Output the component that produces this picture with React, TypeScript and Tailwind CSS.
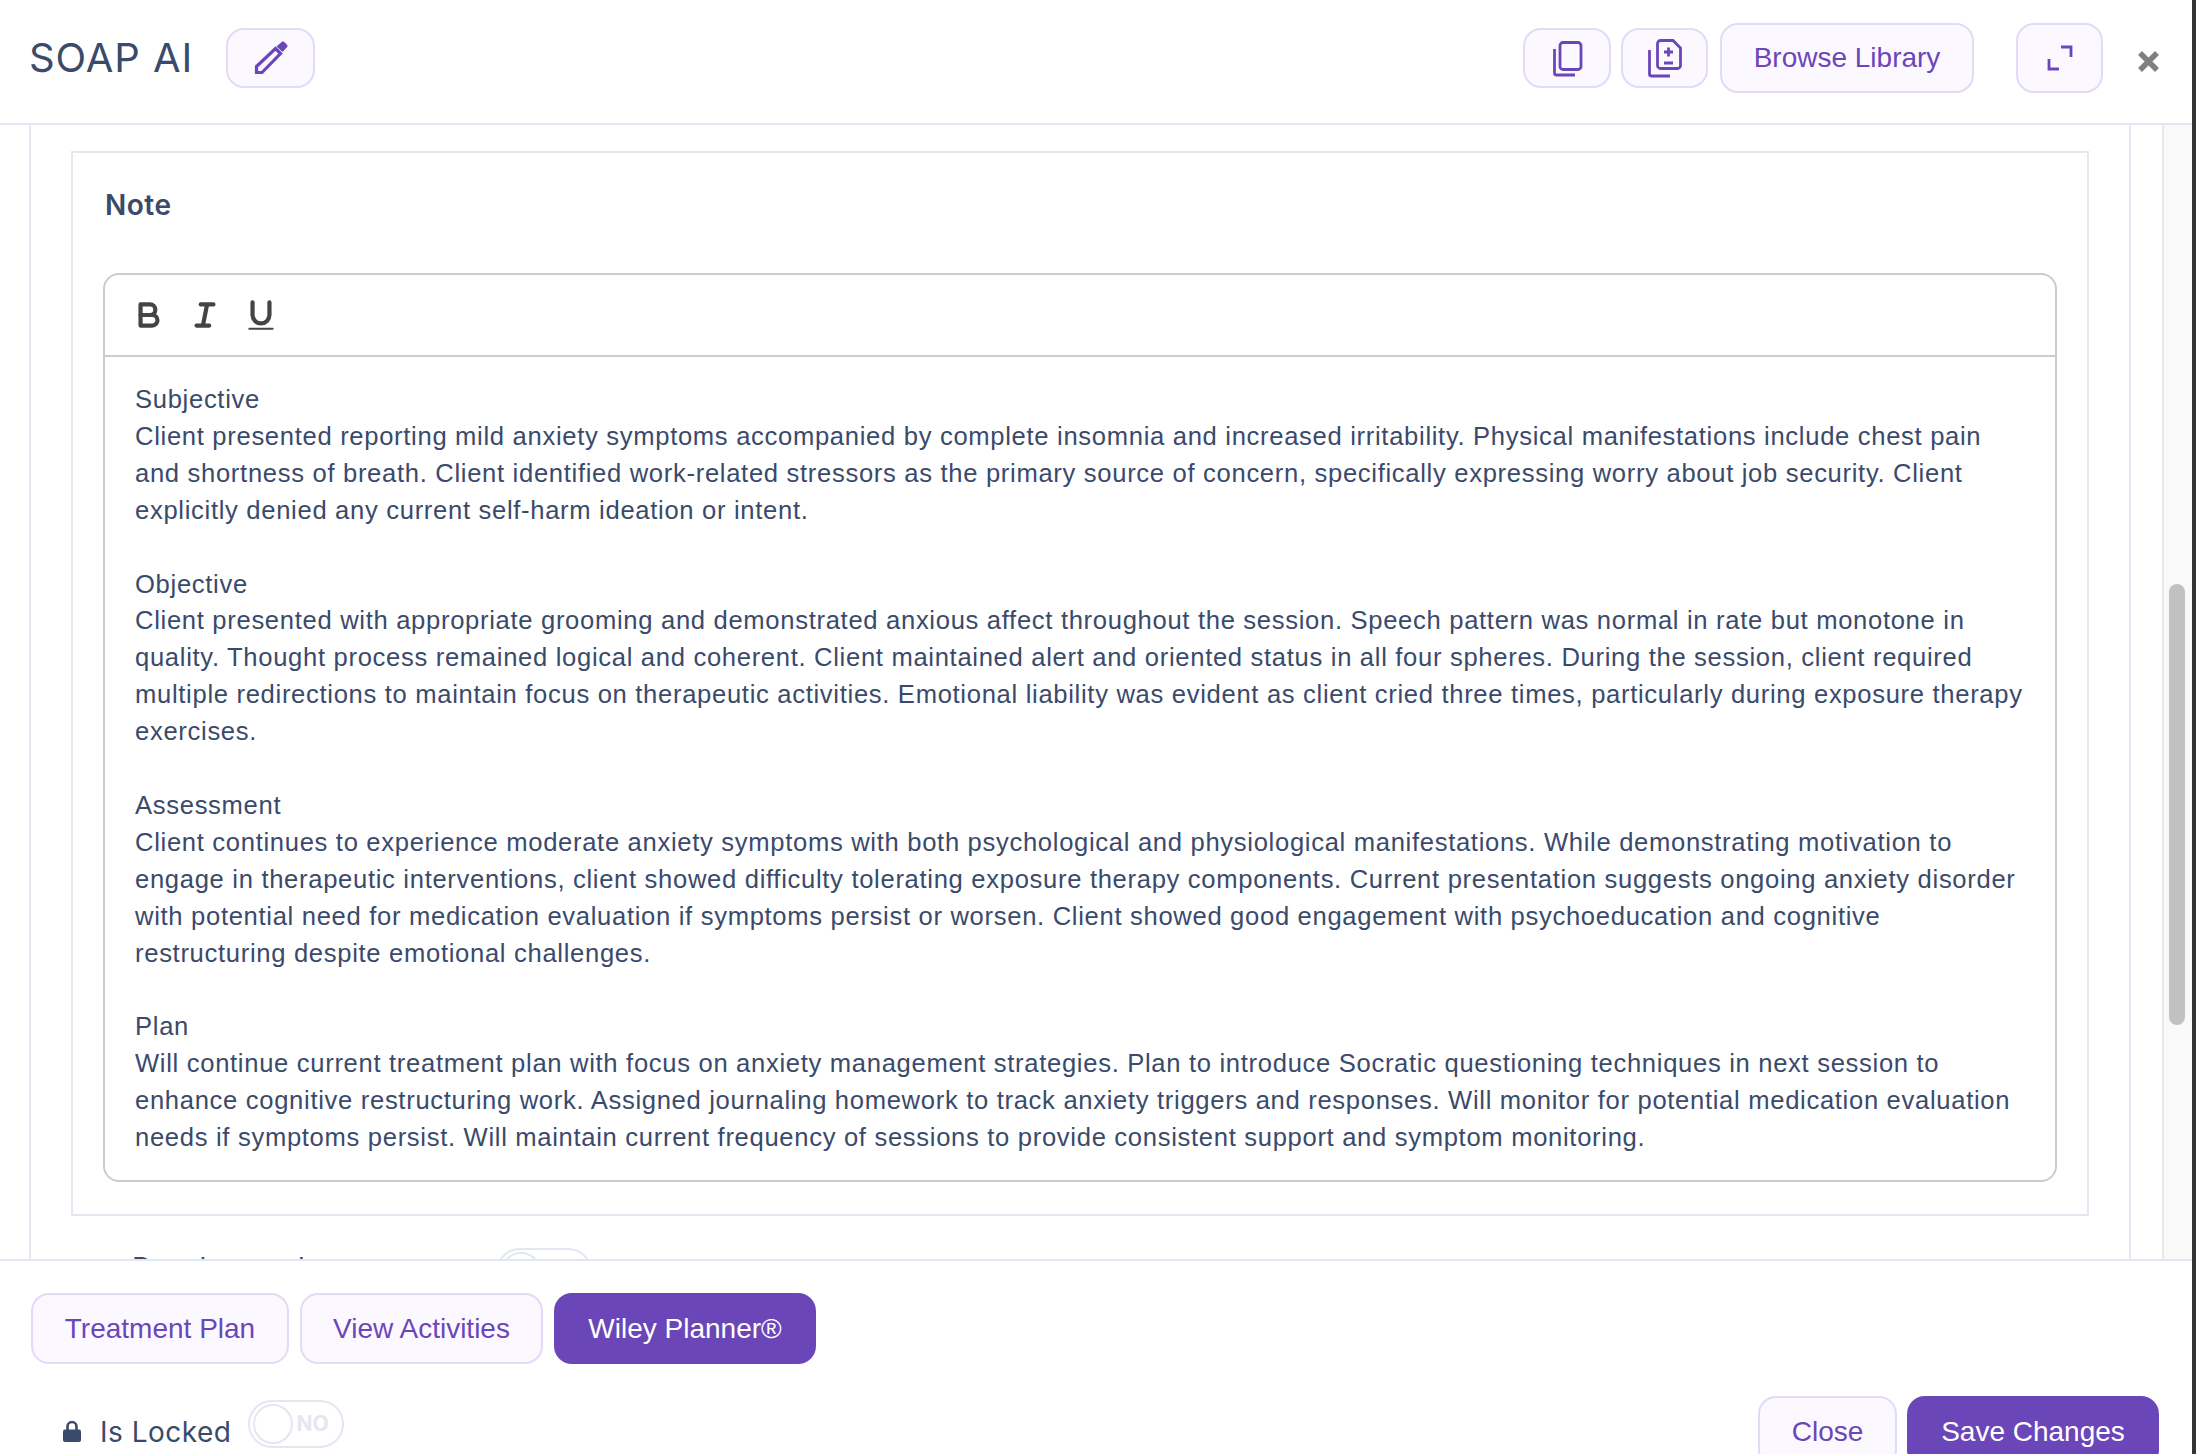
const softButton =
  "flex items-center justify-center border-2 border-[#e3daf8] bg-[#fbf9ff] text-[#6b46b8] rounded-[18px]";
const solidButton = "flex items-center justify-center bg-[#6b46b8] text-white rounded-[18px]";

const SECTIONS = [
  {
    title: "Subjective",
    body: "Client presented reporting mild anxiety symptoms accompanied by complete insomnia and increased irritability. Physical manifestations include chest pain and shortness of breath. Client identified work-related stressors as the primary source of concern, specifically expressing worry about job security. Client explicitly denied any current self-harm ideation or intent.",
  },
  {
    title: "Objective",
    body: "Client presented with appropriate grooming and demonstrated anxious affect throughout the session. Speech pattern was normal in rate but monotone in quality. Thought process remained logical and coherent. Client maintained alert and oriented status in all four spheres. During the session, client required multiple redirections to maintain focus on therapeutic activities. Emotional liability was evident as client cried three times, particularly during exposure therapy exercises.",
  },
  {
    title: "Assessment",
    body: "Client continues to experience moderate anxiety symptoms with both psychological and physiological manifestations. While demonstrating motivation to engage in therapeutic interventions, client showed difficulty tolerating exposure therapy components. Current presentation suggests ongoing anxiety disorder with potential need for medication evaluation if symptoms persist or worsen. Client showed good engagement with psychoeducation and cognitive restructuring despite emotional challenges.",
  },
  {
    title: "Plan",
    body: "Will continue current treatment plan with focus on anxiety management strategies. Plan to introduce Socratic questioning techniques in next session to enhance cognitive restructuring work. Assigned journaling homework to track anxiety triggers and responses. Will monitor for potential medication evaluation needs if symptoms persist. Will maintain current frequency of sessions to provide consistent support and symptom monitoring.",
  },
];

function Toggle() {
  return (
    <div className="flex items-center w-[96px] h-[48px] rounded-full border-2 border-[#e3e7f1] pl-[3px] shrink-0">
      <div className="w-[40px] h-[40px] rounded-full border-2 border-[#e3e7f1] bg-white" />
      <span className="ml-[4px] text-[21px] font-bold text-[#e3e7f1] font-['Inter',sans-serif]">NO</span>
    </div>
  );
}

export default function App() {
  return (
    <div className="w-[2196px] h-[1454px] bg-[#333333] overflow-hidden font-['Liberation_Sans',Arial,sans-serif]">
      <div className="w-[2192px] h-full bg-white flex flex-col">
        {/* header */}
        <div className="h-[125px] shrink-0 border-b-2 border-[#e3e7f1] flex items-center pl-[29px] pr-[32px] pb-[8px]">
          <h1 className="text-[40px] font-normal leading-[48px] tracking-[0.95px] text-[#3a4a6b] font-['Inter',sans-serif]">SOAP AI</h1>
          <button className={`${softButton} ml-[33px] w-[89px] h-[60px]`}>
            <svg width="34" height="34" viewBox="0 0 34 34" fill="none">
              <path d="M2.5 31.5V25.5L21.5 7.5L26.5 12.5L8 31.5Z" stroke="#6b46b8" strokeWidth="3.2" />
              <path d="M22.5 5.5L28 .8Q29 0 30 .8L33.2 4Q34 5 33.2 6L28.5 11Z" fill="#6b46b8" />
            </svg>
          </button>
          <button className={`${softButton} ml-auto w-[88px] h-[60px]`}>
            <svg className="mt-[2px]" width="32" height="40" viewBox="0 0 32 40" fill="none" stroke="#6b46b8" strokeWidth="2.8">
              <rect x="9" y="3.5" width="21" height="27" rx="3" />
              <path d="M3.5 10V34a2 2 0 0 0 2 2H24" />
            </svg>
          </button>
          <button className={`${softButton} ml-[10px] w-[87px] h-[60px]`}>
            <svg className="mt-[2px]" width="38" height="43" viewBox="0 0 38 43" fill="none" stroke="#6b46b8" strokeWidth="2.8">
              <path d="M14 3.5H27L34.5 11V28.5a3 3 0 0 1-3 3H14.5a3 3 0 0 1-3-3V6.5a3 3 0 0 1 3-3Z" />
              <path d="M3.5 13V37a2 2 0 0 0 2 2H24" />
              <path d="M22.5 10.5V19.5M18 15H27M18 26H27" />
            </svg>
          </button>
          <button className={`${softButton} ml-[12px] w-[254px] h-[70px] text-[28px]`}>
            Browse Library
          </button>
          <button className={`${softButton} ml-[42px] w-[87px] h-[70px]`}>
            <svg width="28" height="28" viewBox="0 0 28 28" fill="none" stroke="#6b46b8" strokeWidth="2.8">
              <path d="M15 3H25V13M3 15V25H13" />
            </svg>
          </button>
          <button className="ml-[34px] mt-[8px] w-[23px] h-[23px]">
            <svg width="23" height="23" viewBox="0 0 23 23" fill="none" stroke="#808080" strokeWidth="5.5">
              <path d="M3 3L20 20M20 3L3 20" />
            </svg>
          </button>
        </div>

        {/* scrolling body */}
        <div className="h-[1134px] shrink-0 flex overflow-hidden pl-[29px]">
          <div className="w-[2102px] shrink-0 border-x-2 border-[#e3e7f1] pl-[40px] pr-[40px] pt-[26px]">
            <div className="border-2 border-[#e3e7f1] pl-[30px] pr-[30px] pt-[35px] h-[1065px]">
              <h2 className="ml-[2px] text-[28px] leading-[34px] font-semibold tracking-[0.5px] text-[#3a4a6b] font-['Inter',sans-serif]">Note</h2>
              <div className="mt-[51px] border-2 border-[#cccccc] rounded-[16px] h-[909px] w-[1954px]">
                <div className="h-[82px] border-b-2 border-[#cccccc] flex items-center pl-[16px]">
                  <button className="w-[56px] flex justify-center">
                    <svg width="38" height="38" viewBox="0 0 18 18" fill="none" stroke="#444444" strokeWidth="2" strokeLinecap="round" strokeLinejoin="round">
                      <path d="M5,4H9.5A2.5,2.5,0,0,1,12,6.5v0A2.5,2.5,0,0,1,9.5,9H5A0,0,0,0,1,5,9V4A0,0,0,0,1,5,4Z" />
                      <path d="M5,9h5.5A2.5,2.5,0,0,1,13,11.5v0A2.5,2.5,0,0,1,10.5,14H5a0,0,0,0,1,0,0V9A0,0,0,0,1,5,9Z" />
                    </svg>
                  </button>
                  <button className="w-[56px] flex justify-center">
                    <svg width="38" height="38" viewBox="0 0 18 18" fill="none" stroke="#444444" strokeWidth="2" strokeLinecap="round">
                      <path d="M7 4H13M5 14H11M8 14L10 4" />
                    </svg>
                  </button>
                  <button className="w-[56px] flex justify-center">
                    <svg width="38" height="38" viewBox="0 0 18 18" fill="none" stroke="#444444" strokeWidth="2" strokeLinecap="round">
                      <path d="M5,3V9a4.012,4.012,0,0,0,4,4H9a4.012,4.012,0,0,0,4-4V3" />
                      <rect x="3" y="15" width="12" height="1" rx="0.5" fill="#444444" stroke="none" />
                    </svg>
                  </button>
                </div>
                <div className="pl-[30px] pr-[30px] pt-[24px] text-[25.6px] leading-[36.9px] tracking-[0.685px] text-[#3a4a6b]">
                  {SECTIONS.map((section) => (
                    <div key={section.title} className="mb-[36.9px] last:mb-0">
                      <p>{section.title}</p>
                      <p>{section.body}</p>
                    </div>
                  ))}
                </div>
              </div>
            </div>
            {/* next form row, cut off by the footer */}
            <div className="flex items-start mt-[32px] pl-[61px]">
              <span className="mt-[3px] w-[364px] text-[28px] leading-[34px] text-[#3a4a6b] font-['Inter',sans-serif]">Develop goals</span>
              <Toggle />
            </div>
          </div>
          <div className="ml-[31px] w-[30px] shrink-0 bg-[#f9f9f9] border-l-2 border-[#e8e8e8]">
            <div className="mt-[459px] ml-[5px] w-[16px] h-[441px] rounded-full bg-[#c1c1c1]" />
          </div>
        </div>

        {/* footer */}
        <div className="flex-1 border-t-2 border-[#e3e7f1] overflow-hidden">
          <div className="flex gap-[11px] pl-[31px] pt-[32px] text-[28px]">
            <button className={`${softButton} w-[258px] h-[71px]`}>Treatment Plan</button>
            <button className={`${softButton} w-[243px] h-[71px]`}>View Activities</button>
            <button className={`${solidButton} w-[262px] h-[71px]`}>Wiley Planner®</button>
          </div>
          <div className="flex items-start justify-between mt-[32px] pl-[63px] pr-[33px]">
            <div className="flex items-start">
              <svg className="mt-[24px]" width="18" height="22" viewBox="0 0 18 22" fill="none">
                <path d="M4.5 10V6.5a4.5 4.5 0 0 1 9 0V10" stroke="#3a4a6b" strokeWidth="2.6" />
                <rect y="9.5" width="18" height="12.5" rx="2" fill="#3a4a6b" />
              </svg>
              <span className="ml-[19px] mt-[19px] text-[28px] leading-[34px] tracking-[0.5px] text-[#3a4a6b] font-['Inter',sans-serif]">Is Locked</span>
              <div className="ml-[16px] mt-[4px]">
                <Toggle />
              </div>
            </div>
            <div className="flex gap-[10px] text-[28px]">
              <button className={`${softButton} w-[139px] h-[72px]`}>Close</button>
              <button className={`${solidButton} w-[252px] h-[72px]`}>Save Changes</button>
            </div>
          </div>
        </div>
      </div>
    </div>
  );
}
